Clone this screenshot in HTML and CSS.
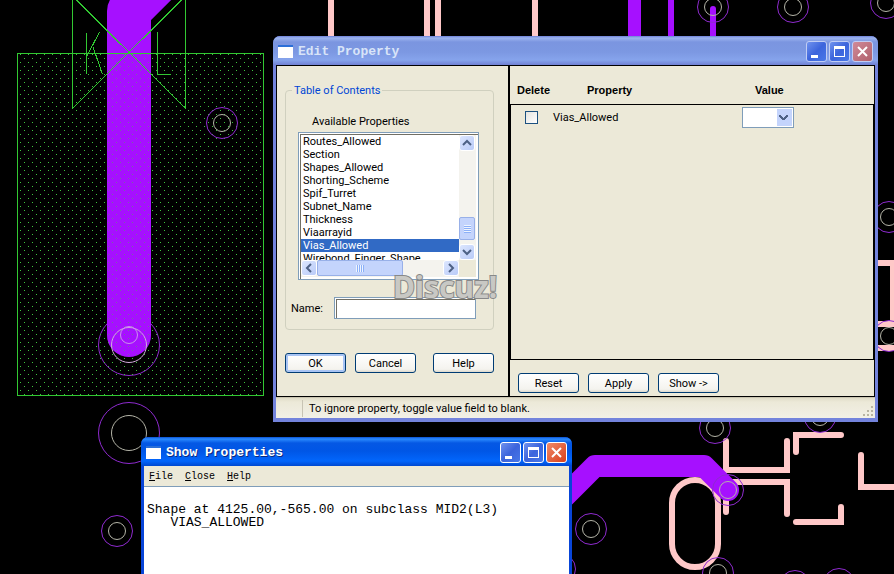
FILE: index.html
```html
<!DOCTYPE html>
<html lang="en">
<head>
  <meta charset="UTF-8" />
  <meta name="viewport" content="width=device-width, initial-scale=1.0"/>
  <title>Edit Property</title>
  <link rel="stylesheet" href="styles.css">
</head>
<body>
  <main class="desktop">
    <!-- board layout -->
    <svg class="board" width="1200" height="800" aria-hidden="true">
      <defs>
        <pattern id="dots" width="8" height="8" patternUnits="userSpaceOnUse">
          <rect x="4" y="6" width="1" height="1" fill="#40c440"/>
          <rect x="0" y="2" width="1" height="1" fill="#40c440"/>
        </pattern>
        <g id="via" fill="none" stroke-width="1">
          <circle r="15.5" stroke="#8f2bd0"/>
          <circle r="8.5" stroke="#b5b5a8"/>
        </g>
      </defs>

      <!-- main trace with the shape fill over it -->
      <circle cx="129" cy="345" r="30.500" fill="none" stroke="#8f2bd0"/>
      <path d="M169 -29L129 11V335" fill="none" stroke="#a610ff" stroke-width="44" stroke-linecap="round" stroke-linejoin="round"/>
      <rect x="17" y="53" width="247" height="343" fill="url(#dots)"/>
      <path d="M107 54V335A22 22 0 0 0 151 335V54Z" fill="#a610ff" opacity="0.5"/>
      <g fill="none" stroke="#32c832" shape-rendering="crispEdges">
        <rect x="17.500" y="53.500" width="246" height="342"/>
        <path d="M72.500 0V108.500L185.500 -4V108.500L72.500 -4M86.500 33V74M99.500 32L87 56M93 47L102.500 74M157.500 32V74.500H171"/>
      </g>
      <g fill="none">
        <circle cx="129" cy="345" r="17.500" stroke="#d2aadc"/>
        <circle cx="129" cy="335" r="8.500" stroke="#cf8ef0"/>
        <circle cx="129" cy="433" r="30.500" stroke="#8f2bd0"/>
        <circle cx="129" cy="433" r="17.500" stroke="#b5b5a8"/>
      </g>

      <!-- silkscreen -->
      <g fill="none" stroke="#ffc8c8" stroke-width="6" stroke-linecap="round">
        <path d="M331 0V40M427 0V40M438 0V40M535 0V40"/>
        <path d="M726 441V470H787V441M787 514V482H730M726 490V512"/>
        <path d="M796 452V435H841M796 522H841V507M861 455V487H900"/>
        <path d="M870 263H893V322M870 324H900M870 348H900"/>
        <rect x="672" y="480" width="46" height="87" rx="23"/>
      </g>

      <!-- top and right traces -->
      <g fill="none" stroke="#a610ff">
        <path d="M634.500 0V40" stroke-width="13"/>
        <path d="M671 0V40" stroke-width="6"/>
        <path d="M713 9V40" stroke-width="6" stroke-linecap="round"/>
        <path d="M555 506L595 466H704L728 490" stroke-width="22" stroke-linecap="round" stroke-linejoin="round"/>
      </g>

      <use href="#via" x="222" y="123"/>
      <use href="#via" x="117" y="531"/>
      <use href="#via" x="713" y="7"/>
      <use href="#via" x="793" y="7"/>
      <use href="#via" x="886" y="3"/>
      <use href="#via" x="889" y="217"/>
      <circle cx="889" cy="336" r="9" fill="#000"/>
      <use href="#via" x="889" y="336"/>
      <use href="#via" x="715" y="428"/>
      <use href="#via" x="820" y="417"/>
      <use href="#via" x="728" y="490"/>
      <use href="#via" x="591" y="529"/>
      <circle cx="718" cy="573" r="9" fill="#000"/>
      <use href="#via" x="718" y="573"/>
      <use href="#via" x="795" y="586"/>
      <use href="#via" x="839" y="584"/>
      <use href="#via" x="560" y="569"/>
    </svg>

    <section class="window edit-window">
      <header class="titlebar">
        <span class="app-icon"></span>
        <h1>Edit Property</h1>
        <button class="win-btn" aria-label="Minimize"><svg width="19" height="19"><path d="M4 13h7v3h-7z" fill="#fff"/></svg></button>
        <button class="win-btn" aria-label="Maximize"><svg width="19" height="19"><path d="M4 4h11v11h-11zM5 7v7h9v-7z" fill="#fff" fill-rule="evenodd"/></svg></button>
        <button class="win-btn close" aria-label="Close"><svg width="19" height="19"><path d="M5 5l9 9M14 5l-9 9" stroke="#fff" stroke-width="2"/></svg></button>
      </header>

      <div class="panes">
        <div class="left-pane">
          <fieldset class="contents">
            <legend>Table of Contents</legend>
            <p class="list-label" id="listLabel">Available Properties</p>
            <div class="list-frame">
              <ul class="property-list" aria-labelledby="listLabel">
                <li>Routes_Allowed</li>
                <li>Section</li>
                <li>Shapes_Allowed</li>
                <li>Shorting_Scheme</li>
                <li>Spif_Turret</li>
                <li>Subnet_Name</li>
                <li>Thickness</li>
                <li>Viaarrayid</li>
                <li class="selected">Vias_Allowed</li>
                <li>Wirebond_Finger_Shape</li>
              </ul>
              <div class="vscroll">
                <button class="scroll-btn" aria-label="Scroll up"><svg width="14" height="14"><path d="M3 9l4-4 4 4" /></svg></button>
                <span class="vthumb"></span>
                <button class="scroll-btn" aria-label="Scroll down"><svg width="14" height="14"><path d="M3 5l4 4 4-4" /></svg></button>
              </div>
              <div class="hscroll">
                <button class="scroll-btn" aria-label="Scroll left"><svg width="14" height="14"><path d="M9 3l-4 4 4 4" /></svg></button>
                <span class="hthumb"></span>
                <button class="scroll-btn" aria-label="Scroll right"><svg width="14" height="14"><path d="M5 3l4 4-4 4" /></svg></button>
              </div>
              <span class="scroll-corner"></span>
            </div>
            <div class="name-row">
              <label for="nameInput">Name:</label>
              <input type="text" id="nameInput">
            </div>
          </fieldset>
          <div class="actions">
            <button class="btn default">OK</button>
            <button class="btn">Cancel</button>
            <button class="btn help">Help</button>
          </div>
        </div>

        <div class="right-pane">
          <div class="grid-row grid-head">
            <span>Delete</span>
            <span>Property</span>
            <span>Value</span>
          </div>
          <div class="grid-body">
            <div class="grid-row">
              <input type="checkbox" id="deleteVias">
              <label for="deleteVias">Vias_Allowed</label>
              <select aria-label="Value"><option></option><option>TRUE</option></select>
            </div>
          </div>
          <div class="actions">
            <button class="btn">Reset</button>
            <button class="btn">Apply</button>
            <button class="btn">Show -&gt;</button>
          </div>
        </div>
      </div>

      <footer class="statusbar">
        <span class="status-cell"></span>
        <p>To ignore property, toggle value field to blank.</p>
        <svg class="grip" width="12" height="12"><path d="M8 0h2v2h-2zM4 4h2v2h-2zM8 4h2v2h-2zM0 8h2v2h-2zM4 8h2v2h-2zM8 8h2v2h-2z" fill="#b8b4a2"/></svg>
      </footer>
      <span class="watermark">Discuz!</span>
    </section>

    <section class="window show-window">
      <header class="titlebar">
        <span class="app-icon"></span>
        <h2>Show Properties</h2>
        <button class="win-btn" aria-label="Minimize"><svg width="19" height="19"><path d="M4 13h7v3h-7z" fill="#fff"/></svg></button>
        <button class="win-btn" aria-label="Maximize"><svg width="19" height="19"><path d="M4 4h11v11h-11zM5 7v7h9v-7z" fill="#fff" fill-rule="evenodd"/></svg></button>
        <button class="win-btn close" aria-label="Close"><svg width="19" height="19"><path d="M5 5l9 9M14 5l-9 9" stroke="#fff" stroke-width="2"/></svg></button>
      </header>
      <nav class="menubar">
        <a href="#"><u>F</u>ile</a>
        <a href="#"><u>C</u>lose</a>
        <a href="#"><u>H</u>elp</a>
      </nav>
      <pre class="output">Shape at 4125.00,-565.00 on subclass MID2(L3)
   VIAS_ALLOWED</pre>
    </section>
  </main>
</body>
</html>
```
FILE: styles.css
```css
* {
  margin: 0;
  padding: 0;
  box-sizing: border-box;
}

body {
  background: #000;
  color: #000;
  font: 11px/13px Roboto, "Liberation Sans", Arial, sans-serif;
}

button,
input,
select {
  font: inherit;
  color: inherit;
}

.desktop {
  position: relative;
  height: 100vh;
  overflow: hidden;
}

.board {
  position: absolute;
  top: 0;
  left: 0;
}

/* windows */
.window {
  position: absolute;
  display: flex;
  flex-direction: column;
  border-radius: 7px 7px 0 0;
}

.edit-window {
  top: 36px;
  left: 273px;
  width: 605px;
  padding: 0 3px 4px;
  background: #7383dc;
}

.show-window {
  top: 437px;
  left: 141px;
  bottom: 0;
  width: 431px;
  padding: 0 3px;
  background: #0845d8;
}

.titlebar {
  display: flex;
  align-items: center;
  gap: 2px;
  height: 29px;
  margin: 0 -3px;
  padding: 2px 5px 0;
  border-radius: 7px 7px 0 0;
  background: linear-gradient(#6d80d8 0, #9cb4ee 2px, #7b95e0 6px, #7c98e2 16px, #86a4ec 24px, #7080d4 100%);
}

.show-window .titlebar {
  background: linear-gradient(#0a4fd0 0, #2b8bff 2px, #0558e4 6px, #0056e6 14px, #0266fc 24px, #0048d0 100%);
}

.app-icon {
  width: 15px;
  height: 13px;
  border-top: 2px solid #2b6fd8;
  background: #fff;
}

.titlebar h1,
.titlebar h2 {
  flex: 1;
  padding-left: 3px;
  color: #d8e4f8;
  font: bold 13px/16px "Liberation Mono", "Courier New", monospace;
}

.titlebar h2 {
  color: #fff;
  text-shadow: 1px 1px #0a2a80;
}

.win-btn {
  width: 21px;
  height: 21px;
  border: 1px solid #c0cdf4;
  border-radius: 3px;
  background: linear-gradient(135deg, #6f92ee, #3c64dc 50%, #4878e8);
}

.win-btn.close {
  background: linear-gradient(135deg, #d08a98, #b0606c);
}

.win-btn svg {
  display: block;
}

.show-window .win-btn {
  border-color: #fff;
}

.show-window .close {
  background: linear-gradient(135deg, #f08a68, #d8401c);
}

.panes {
  display: flex;
  border: 1px solid #000;
  background: #ece9d8;
}

.left-pane {
  width: 233px;
  padding: 18px 14px 23px 8px;
  border-right: 2px solid #000;
}

.contents {
  min-width: 0;
  padding: 15px 14px 10px 5px;
  border: 1px solid #d0d0bf;
  border-radius: 4px;
}

.contents legend {
  margin-left: 1px;
  padding: 0 2px;
  color: #0046d5;
}

.list-label {
  margin: 3px 0 4px 21px;
}

.list-frame {
  display: grid;
  grid-template: 125px 17px / 1fr 17px;
  margin-left: 7px;
  padding: 2px;
  height: 148px;
  border: 1px solid #7f9db9;
  background: #fff;
  box-shadow: inset 1px 1px #fff, inset 2px 2px #716f64;
}

.property-list {
  list-style: none;
  overflow: hidden;
}

.property-list li {
  height: 13px;
  padding-left: 2px;
  white-space: nowrap;
}

.property-list .selected {
  background: #316ac5;
  color: #fff;
}

.vscroll,
.hscroll {
  display: flex;
  background: #f4f3ee;
}

.vscroll {
  flex-direction: column;
}

.scroll-corner {
  background: #ece9d8;
}

.scroll-btn {
  flex: none;
  width: 16px;
  height: 16px;
  border: 1px solid #fff;
  border-radius: 3px;
  background: linear-gradient(135deg, #dce6fe, #b9cbf8);
}

.scroll-btn svg {
  display: block;
  fill: none;
  stroke: #4d6185;
  stroke-width: 2;
}

.vthumb,
.hthumb {
  border: 1px solid #98b0e8;
  border-radius: 2px;
}

.vthumb {
  width: 16px;
  height: 23px;
  margin-top: auto;
  margin-bottom: 4px;
  background: repeating-linear-gradient(#eef4fe 0 1px, #8cb0f8 1px 2px) center / 7px 8px no-repeat, #c4d4fc;
}

.hthumb {
  width: 86px;
  height: 16px;
  margin-right: auto;
  background: repeating-linear-gradient(90deg, #eef4fe 0 1px, #8cb0f8 1px 2px) center / 8px 7px no-repeat, #c4d4fc;
}

.name-row {
  display: flex;
  align-items: center;
  gap: 11px;
  margin-top: 17px;
  padding-right: 3px;
}

.name-row input {
  flex: 1;
  min-width: 0;
  height: 22px;
  padding: 0 4px;
  border: 1px solid #7f9db9;
  background: #fff;
  box-shadow: inset 1px 1px #fff, inset 2px 2px #716f64;
}

.actions {
  display: flex;
  gap: 9px;
}

.left-pane .actions {
  margin-top: 23px;
}

.btn {
  width: 61px;
  height: 20px;
  border: 1px solid #003c74;
  border-radius: 3px;
  background: linear-gradient(#fff, #f4f3ee 85%, #dcd8cc);
}

.btn.default {
  box-shadow: inset 0 0 0 2px #a8c4f4;
}

.btn.help {
  margin-left: auto;
}

.right-pane {
  flex: 1;
  display: flex;
  flex-direction: column;
}

.grid-row {
  display: grid;
  grid-template-columns: 70px 155px 1fr;
  align-items: center;
}

.grid-head {
  height: 38px;
  padding: 10px 7px 0;
  font-family: "Liberation Sans", Arial, sans-serif;
  font-weight: bold;
}

.grid-head span:last-child {
  padding-left: 13px;
}

.grid-body {
  flex: 1;
  border: 1px solid #000;
}

.grid-body .grid-row {
  grid-template-columns: 28px 189px 1fr;
  padding: 2px 14px;
}

.grid-body input {
  appearance: none;
  width: 13px;
  height: 13px;
  border: 1px solid #1c5180;
  background: linear-gradient(135deg, #e4e4df, #fff);
}

.grid-body select {
  appearance: none;
  width: 52px;
  height: 21px;
  border: 1px solid #7f9db9;
  border-radius: 0;
  background:
    linear-gradient(45deg, transparent 40%, #4d6185 40% 66%, transparent 66%) 36px 7px / 5px 5px no-repeat,
    linear-gradient(-45deg, transparent 40%, #4d6185 40% 66%, transparent 66%) 40px 7px / 5px 5px no-repeat,
    linear-gradient(#c4d4fc, #c4d4fc) right 1px center / 15px 17px no-repeat,
    #fff;
}

.right-pane .actions {
  padding: 13px 8px 3px;
}

.statusbar {
  display: flex;
  align-items: center;
  height: 21px;
  border-top: 1px solid #c8c4b0;
  background: linear-gradient(#e0dcc8, #ece9d8 4px, #f2f0e6);
}

.status-cell {
  width: 27px;
  height: 17px;
  border-right: 1px solid #c8c4b4;
}

.statusbar p {
  flex: 1;
  padding-left: 6px;
}

.grip {
  align-self: flex-end;
}

.watermark {
  position: absolute;
  top: 234px;
  left: 120px;
  color: #c8c8c4;
  font: bold 30px/34px "Noto Sans", "Open Sans", sans-serif;
  -webkit-text-stroke: 2px #888;
  paint-order: stroke fill;
}

.menubar {
  display: flex;
  gap: 12px;
  height: 20px;
  padding: 4px 5px 3px;
  background: #ece9d8;
  font: 10px/13px "Liberation Mono", "Courier New", monospace;
}

.menubar a {
  color: #000;
  text-decoration: none;
}

.output {
  flex: 1;
  padding: 16px 3px;
  border-top: 1px solid #7f9db9;
  background: #fff;
  font: 13px/13px "Liberation Mono", "Courier New", monospace;
}
```
